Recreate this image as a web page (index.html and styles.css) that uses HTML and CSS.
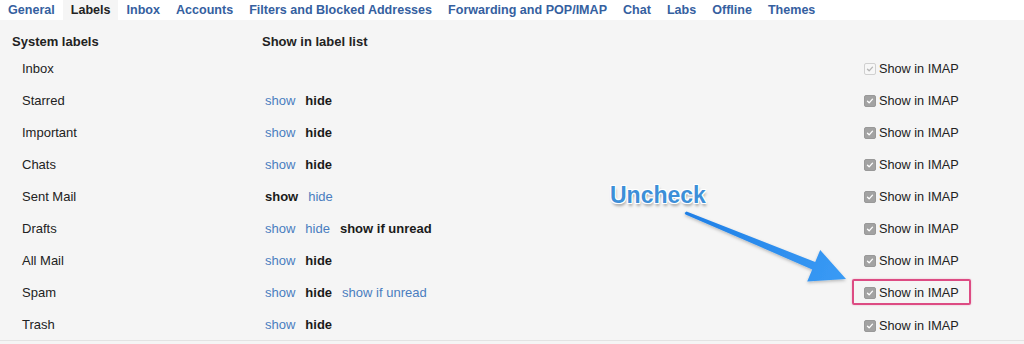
FILE: index.html
```html
<!DOCTYPE html>
<html>
<head>
<meta charset="utf-8">
<link rel="stylesheet" href="styles.css">
</head>
<body>
<div class="page">
  <nav class="tabs">
    <span class="tab">General</span>
    <span class="tab active">Labels</span>
    <span class="tab">Inbox</span>
    <span class="tab">Accounts</span>
    <span class="tab">Filters and Blocked Addresses</span>
    <span class="tab">Forwarding and POP/IMAP</span>
    <span class="tab">Chat</span>
    <span class="tab">Labs</span>
    <span class="tab">Offline</span>
    <span class="tab">Themes</span>
  </nav>
  <section class="labels">
    <div class="head">
      <span class="h-name">System labels</span>
      <span class="h-opts">Show in label list</span>
    </div>

    <div class="row">
      <span class="name">Inbox</span>
      <span class="opts"></span>
      <span class="imap"><span class="cb disabled"><svg viewBox="0 0 12 12"><path d="M3 6.2 L5 8.2 L9 3.8" /></svg></span>Show in IMAP</span>
    </div>
    <div class="row">
      <span class="name">Starred</span>
      <span class="opts"><a class="lnk">show</a><b>hide</b></span>
      <span class="imap"><span class="cb"><svg viewBox="0 0 12 12"><path d="M3 6.2 L5 8.2 L9 3.8" /></svg></span>Show in IMAP</span>
    </div>
    <div class="row">
      <span class="name">Important</span>
      <span class="opts"><a class="lnk">show</a><b>hide</b></span>
      <span class="imap"><span class="cb"><svg viewBox="0 0 12 12"><path d="M3 6.2 L5 8.2 L9 3.8" /></svg></span>Show in IMAP</span>
    </div>
    <div class="row">
      <span class="name">Chats</span>
      <span class="opts"><a class="lnk">show</a><b>hide</b></span>
      <span class="imap"><span class="cb"><svg viewBox="0 0 12 12"><path d="M3 6.2 L5 8.2 L9 3.8" /></svg></span>Show in IMAP</span>
    </div>
    <div class="row">
      <span class="name">Sent Mail</span>
      <span class="opts"><b>show</b><a class="lnk">hide</a></span>
      <span class="imap"><span class="cb"><svg viewBox="0 0 12 12"><path d="M3 6.2 L5 8.2 L9 3.8" /></svg></span>Show in IMAP</span>
    </div>
    <div class="row">
      <span class="name">Drafts</span>
      <span class="opts"><a class="lnk">show</a><a class="lnk">hide</a><b>show if unread</b></span>
      <span class="imap"><span class="cb"><svg viewBox="0 0 12 12"><path d="M3 6.2 L5 8.2 L9 3.8" /></svg></span>Show in IMAP</span>
    </div>
    <div class="row">
      <span class="name">All Mail</span>
      <span class="opts"><a class="lnk">show</a><b>hide</b></span>
      <span class="imap"><span class="cb"><svg viewBox="0 0 12 12"><path d="M3 6.2 L5 8.2 L9 3.8" /></svg></span>Show in IMAP</span>
    </div>
    <div class="row">
      <span class="name">Spam</span>
      <span class="opts"><a class="lnk">show</a><b>hide</b><a class="lnk">show if unread</a></span>
      <span class="imap highlight"><span class="cb"><svg viewBox="0 0 12 12"><path d="M3 6.2 L5 8.2 L9 3.8" /></svg></span>Show in IMAP</span>
    </div>
    <div class="row last">
      <span class="name">Trash</span>
      <span class="opts"><a class="lnk">show</a><b>hide</b></span>
      <span class="imap"><span class="cb"><svg viewBox="0 0 12 12"><path d="M3 6.2 L5 8.2 L9 3.8" /></svg></span>Show in IMAP</span>
    </div>
  </section>

  <div class="callout">Uncheck</div>
  <svg class="arrow" viewBox="0 0 1024 344" width="1024" height="344">
    <defs>
      <linearGradient id="ag" x1="686" y1="213" x2="846" y2="279" gradientUnits="userSpaceOnUse">
        <stop offset="0" stop-color="#1f7fe6"/>
        <stop offset="1" stop-color="#3a9bf5"/>
      </linearGradient>
      <filter id="sh" x="-10%" y="-10%" width="120%" height="130%">
        <feDropShadow dx="0" dy="1.5" stdDeviation="1.5" flood-color="#000" flood-opacity="0.25"/>
      </filter>
    </defs>
    <polygon filter="url(#sh)" fill="url(#ag)" points="686.5,211.6 815.2,262 820.2,250 846,279 807.2,281.4 812.2,269.4 685.5,214.4 684.6,213"/>
  </svg>
</div>
</body>
</html>
```

FILE: styles.css
```css
* { box-sizing: border-box; }
html, body { margin: 0; padding: 0; }
body {
  width: 1024px;
  height: 344px;
  overflow: hidden;
  background: #f5f5f5;
  font-family: "Liberation Sans", Arial, sans-serif;
  font-size: 13px;
  color: #222;
}
.page { position: relative; width: 1024px; height: 344px; }

.tabs {
  display: flex;
  height: 20px;
  background: #ffffff;
  align-items: stretch;
}
.tab {
  padding: 0 8px;
  font-size: 12.55px;
  font-weight: bold;
  color: #35609f;
  line-height: 21px;
  white-space: nowrap;
}
.tab.active { background: #f5f5f5; color: #222; }

.labels { display: flex; flex-direction: column; }

.head {
  display: flex;
  height: 32px;
  padding: 12px 0 0 12px;
  line-height: 20px;
  font-weight: bold;
}
.h-name { width: 250px; }

.row {
  display: flex;
  align-items: center;
  height: 32px;
  padding-left: 22px;
}
.row.last { border-bottom: 1px solid #e3e3e3; height: 33px; padding-top: 1px; }
.name { width: 243px; }
.opts { width: 587px; display: flex; gap: 10px; }
.opts b { color: #1a1a1a; }
.lnk { color: #4a7dbf; text-decoration: none; cursor: pointer; }

.imap {
  display: flex;
  align-items: center;
  gap: 3px;
  padding: 5px 10px 3px;
  border: 2px solid transparent;
  border-radius: 2px;
  color: #222;
  font-size: 12.7px;
  white-space: nowrap;
}
.imap.highlight {
  border-color: #dd4b83;
  box-shadow: 0 0 2px rgba(221, 75, 131, 0.4);
}
.cb {
  display: inline-block;
  width: 12px;
  height: 12px;
  border-radius: 2px;
  background: #a2a2a2;
  border: 1px solid #999;
}
.cb svg { display: block; width: 10px; height: 10px; }
.cb path { fill: none; stroke: #ffffff; stroke-width: 1.6; stroke-linecap: round; stroke-linejoin: round; }
.cb.disabled { background: #f7f7f7; border-color: #d0d0d0; }
.cb.disabled path { stroke: #b5b5b5; }

.callout {
  position: absolute;
  left: 610px;
  top: 184px;
  font-size: 23px;
  line-height: 23px;
  font-weight: bold;
  color: #3d8fd8;
  text-shadow:
    1px 0 0 #fff, -1px 0 0 #fff, 0 1px 0 #fff, 0 -1px 0 #fff,
    1px 1px 0 #fff, -1px -1px 0 #fff, 1px -1px 0 #fff, -1px 1px 0 #fff,
    1px 3px 3px rgba(0, 0, 0, 0.35);
}
.arrow {
  position: absolute;
  left: 0;
  top: 0;
  pointer-events: none;
}
```
